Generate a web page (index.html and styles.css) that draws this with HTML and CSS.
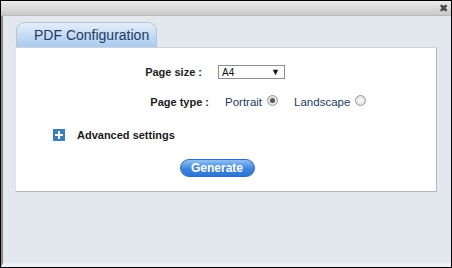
FILE: index.html
```html
<!DOCTYPE html>
<html lang="en">
<head>
    <meta charset="UTF-8">
    <title>PDF Configuration</title>
    <link rel="stylesheet" href="styles.css">
</head>
<body>

<div class="dialog">
  <div class="titlebar">
    <span class="close">&#x2716;</span>
  </div>

  <div class="dialog-body">
    <div class="tabs">
      <div class="tab">PDF Configuration</div>
    </div>

    <div class="panel">
      <div class="row">
        <span class="label">Page size :</span>
        <div class="select">
          <span>A4</span>
          <span class="arrow">&#9660;</span>
        </div>
      </div>

      <div class="row row-type">
        <span class="label">Page type :</span>
        <span class="option">Portrait</span>
        <span class="radio checked"></span>
        <span class="option">Landscape</span>
        <span class="radio"></span>
      </div>

      <div class="advanced">
        <span class="plus"></span>
        <span>Advanced settings</span>
      </div>

      <div class="actions">
        <button class="generate" type="button">Generate</button>
      </div>
    </div>
  </div>
</div>

</body>
</html>
```

FILE: styles.css
```css
body {
  margin: 0;
  font-family: "Liberation Sans", Arial, sans-serif;
  font-size: 11px;
  color: #1a1a1a;
}

div.dialog {
  width: 452px;
  height: 268px;
  box-sizing: border-box;
  border: 1px solid #000;
  display: flex;
  flex-direction: column;
  background: #e3e7ee;
}

div.titlebar {
  height: 14px;
  background: linear-gradient(#ececec, #c9c9c9);
  border-bottom: 1px solid #b9b9b9;
  display: flex;
  justify-content: flex-end;
  align-items: center;
}

span.close {
  font-size: 11px;
  color: #4a4a4a;
  margin-right: 3px;
  line-height: 11px;
}

div.dialog-body {
  flex: 1;
  border-left: 2px solid #8a8a8a;
  border-bottom: 4px solid #edf0f4;
  padding: 6px 14px 0 12px;
}

div.tabs {
  display: flex;
  padding-left: 1px;
}

div.tab {
  width: 122px;
  height: 24px;
  padding-left: 17px;
  border: 1px solid #b5c3d3;
  border-bottom: none;
  border-radius: 9px 9px 0 0;
  background: linear-gradient(#e4eefa, #a9caef);
  font-size: 14px;
  line-height: 25px;
  color: #1d3b63;
}

div.panel {
  height: 145px;
  box-sizing: border-box;
  background: #fff;
  border: 1px solid #b2b4b6;
  border-top-color: #cfd3d8;
  border-left-color: #e0e3e7;
  padding-top: 17px;
}

div.row {
  display: flex;
  align-items: center;
  height: 14px;
}

span.label {
  width: 186px;
  text-align: right;
  font-weight: bold;
  color: #222;
}

div.select {
  margin-left: 16px;
  width: 58px;
  height: 12px;
  border: 1px solid #8e8e8e;
  display: flex;
  justify-content: space-between;
  align-items: center;
  padding: 0 4px 0 3px;
  font-size: 10px;
  color: #111;
}

span.arrow {
  font-size: 9px;
}

div.row-type {
  margin-top: 16px;
}

div.row-type span.label {
  width: 193px;
}

span.option {
  margin-left: 16px;
  color: #1d3b63;
  font-size: 11.5px;
}

span.option + span.radio {
  margin-left: 5px;
}

span.radio {
  width: 11px;
  height: 11px;
  border-radius: 50%;
  border: 1px solid #9a9a9a;
  background: radial-gradient(#fdfdfd, #d4d4d4);
  margin-top: -4px;
  box-sizing: border-box;
  position: relative;
}

span.radio.checked::after {
  content: "";
  position: absolute;
  left: 2px;
  top: 2px;
  width: 5px;
  height: 5px;
  border-radius: 50%;
  background: #555;
}

span.option:nth-of-type(3) {
  margin-left: 12px;
}

div.advanced {
  display: flex;
  align-items: center;
  margin-top: 20px;
  margin-left: 37px;
  font-weight: bold;
  color: #1a1a1a;
}

span.plus {
  width: 12px;
  height: 12px;
  margin-right: 12px;
  background:
    linear-gradient(#fff, #fff) center / 8px 2px no-repeat,
    linear-gradient(#fff, #fff) center / 2px 8px no-repeat,
    #3a7fc0;
}

div.actions {
  display: flex;
  justify-content: center;
  margin-top: 18px;
  padding-right: 18px;
}

button.generate {
  width: 75px;
  height: 18px;
  padding: 0;
  border: 1px solid #2f6cc0;
  border-radius: 9px;
  background: linear-gradient(#8fc0f5, #3c86e0 55%, #2e73d0);
  color: #fff;
  font-family: "Liberation Sans", Arial, sans-serif;
  font-weight: bold;
  font-size: 12px;
}
```
